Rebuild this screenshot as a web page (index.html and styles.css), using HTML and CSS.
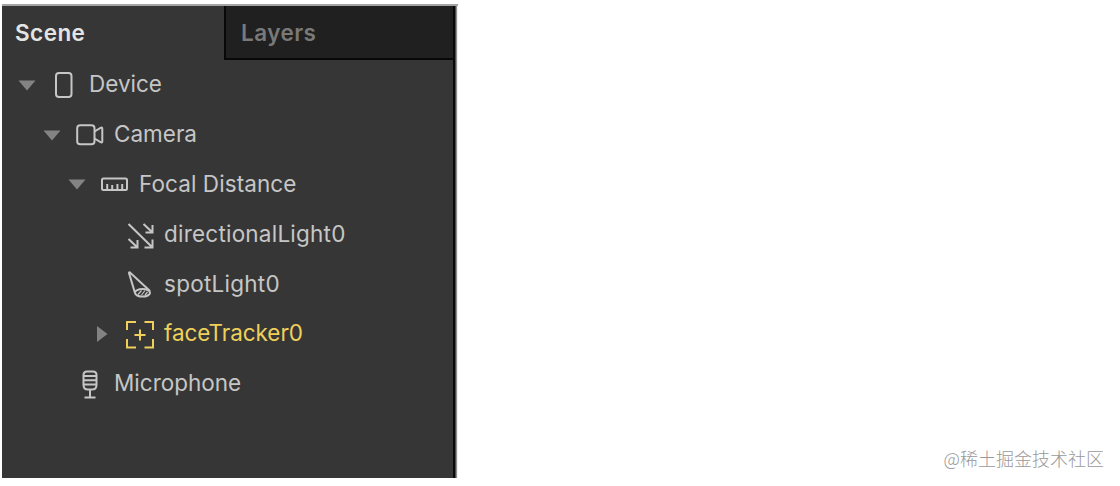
FILE: index.html
```html
<!DOCTYPE html>
<html lang="en">
<head>
<meta charset="utf-8">
<title>Scene</title>
<link rel="stylesheet" href="styles.css">
</head>
<body>
<main class="panel">
  <nav class="tabs">
    <div class="tab active"><span class="scene-label">Scene</span></div>
    <div class="tab inactive"><span class="layers-label">Layers</span></div>
  </nav>
  <div class="tree">
    <div class="row level-0">
      <svg class="arrow" viewBox="0 0 18 18"><path d="M.5 4.500h17L9 14.500z"/></svg>
      <svg class="icon" viewBox="0 0 30 30"><rect x="6" y="3" width="15.500" height="24" rx="3"/></svg>
      <span class="name device">Device</span>
    </div>
    <div class="row level-1">
      <svg class="arrow" viewBox="0 0 18 18"><path d="M.5 4.500h17L9 14.500z"/></svg>
      <svg class="icon" viewBox="0 0 30 30"><rect x="2.200" y="5.200" width="17.300" height="19" rx="3"/><path d="M19.500 11.500l6-3.700q1.800-.8 1.800 1v12.400q0 1.800-1.800 1l-6-3.700"/></svg>
      <span class="name camera">Camera</span>
    </div>
    <div class="row level-2">
      <svg class="arrow" viewBox="0 0 18 18"><path d="M.5 4.500h17L9 14.500z"/></svg>
      <svg class="icon" viewBox="0 0 30 30"><rect x="2" y="9.500" width="25" height="11.500" rx="1.500"/><path d="M7.200 20v-5M12.200 20v-4M17.400 20v-5M22.200 20v-5"/></svg>
      <span class="name focal">Focal Distance</span>
    </div>
    <div class="row level-3">
      <span class="arrow"></span>
      <svg class="icon" viewBox="0 0 30 30"><path d="M3.500 5l24 23.500M19.500 28.500h8v-8M18.500 5l9 8.500M20.500 13.500h7v-7.500M3.500 20l9 8.500M5.500 28.500h7v-7.500"/></svg>
      <span class="name directional">directionalLight0</span>
    </div>
    <div class="row level-3">
      <span class="arrow"></span>
      <svg class="icon" viewBox="0 0 30 30"><path d="M10 24L4 4q0-1 1-.5L25 22"/><ellipse cx="17.500" cy="23.800" rx="7.500" ry="3.800"/><path class="fine" d="M13 25.500l3.500-4M16.500 26l3.500-4.500M20 26l2.500-3"/></svg>
      <span class="name spot">spotLight0</span>
    </div>
    <div class="row level-3 selected">
      <svg class="arrow" viewBox="0 0 18 18"><path d="M4 1l10.500 8L4 17z"/></svg>
      <svg class="icon" viewBox="0 0 30 30"><path d="M2 11V3h9M19.500 3h8.500V11M2 20v8.500h9M19.500 28.500h8.500V20M15 10.500v11M9.500 16h11"/></svg>
      <span class="name face">faceTracker0</span>
    </div>
    <div class="row level-1">
      <span class="arrow"></span>
      <svg class="icon" viewBox="0 0 30 30"><path d="M8.500 16V6q0-3.500 3.500-3.500h6Q21.500 2.500 21.500 6v10q0 4.500-4.500 4.500h-4q-4.500 0-4.500-4.500zM9 7h12M9 11.200h12M9 15.500h12M15 20.500v7.500M9.500 28.500h11"/></svg>
      <span class="name mic">Microphone</span>
    </div>
  </div>
</main>
<footer class="credit">@稀土掘金技术社区</footer>
</body>
</html>
```
FILE: styles.css
```css
* { box-sizing: border-box; }
body {
  margin: 0;
  height: 486px;
  padding: 4px 16px 8px 2px;
  display: flex;
  justify-content: space-between;
  align-items: flex-end;
  overflow: hidden;
  background: #fff;
  font-family: Inter, "Noto Sans CJK SC", sans-serif;
}
.panel {
  width: 456px;
  height: 474px;
  background: linear-gradient(to right, #363636 451px, #080808 451px, #080808 453px, #4b4b4b 453px, #4b4b4b 454px, #909090 454px, #909090 455px, #eee 455px);
  border-top: 2px solid #a4a6a4;
}
.tabs { display: flex; height: 54px; width: 453px; }
.tab {
  height: 54px;
  font-size: 22.500px;
  font-weight: 600;
  letter-spacing: .45px;
  line-height: 53px;
  white-space: nowrap;
}
.active { width: 222px; padding-left: 13px; color: #e4e4e4; }
.inactive {
  width: 231px;
  padding-left: 15px;
  color: #797979;
  background: #202020;
  border: solid #080808;
  border-width: 0 2px 2px;
}
.tree { width: 450px; }
.row {
  display: flex;
  align-items: center;
  height: 49.800px;
  color: #c6c6c6;
}
.level-0 { padding-left: 16px; }
.level-1 { padding-left: 41px; }
.level-2 { padding-left: 66px; }
.level-3 { padding-left: 91px; }
.arrow { width: 18px; height: 18px; flex: none; margin-right: 14px; fill: #838383; }
.icon {
  width: 30px;
  height: 30px;
  flex: none;
  margin-right: 9px;
  fill: none;
  stroke: currentColor;
  stroke-width: 2;
}
.fine { stroke-width: 1.200; }
.name { font-size: 22.500px; line-height: 30px; padding-bottom: 1px; white-space: nowrap; }
.focal { letter-spacing: .08px; }
.directional { letter-spacing: .22px; }
.spot { letter-spacing: .25px; }
.face { letter-spacing: -.06px; }
.selected { color: #efd05b; }
.credit {
  color: #999;
  font-size: 18px;
  font-weight: 300;
  line-height: 26px;
  margin-bottom: 7px;
  font-family: "Noto Sans CJK SC", sans-serif;
}
```
